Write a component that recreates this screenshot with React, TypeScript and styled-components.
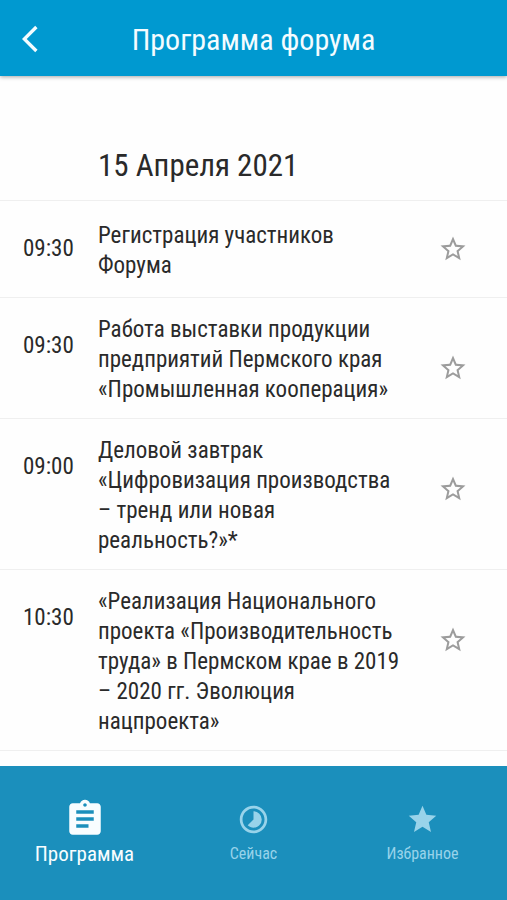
import React, { useState } from "react";
import styled, { createGlobalStyle } from "styled-components";
import { MdArrowBackIos, MdAssignment, MdStar, MdStarBorder, MdTimelapse } from "react-icons/md";

const GlobalStyle = createGlobalStyle`
  * { box-sizing: border-box; }
  body {
    margin: 0;
    background: #fefefe;
    font-family: "Roboto Condensed", Roboto, sans-serif;
    color: #2a2a2a;
  }
  button { font: inherit; border: 0; background: none; padding: 0; cursor: pointer; }
`;

const Screen = styled.div`
  display: flex;
  flex-direction: column;
  height: 100vh;
`;

const Header = styled.header`
  display: grid;
  grid-template-columns: 64px 1fr 64px;
  align-items: center;
  flex: none;
  height: 76px;
  padding-top: 2px;
  background: #0099d0;
  color: #f4fcff;
  box-shadow: 0 1px 4px rgba(0, 0, 0, 0.35);
  z-index: 1;
`;

const BackButton = styled.button`
  display: flex;
  align-items: center;
  height: 48px;
  padding-left: 22px;
  color: inherit;
`;

const Title = styled.h1`
  margin: 0;
  padding-top: 2px;
  text-align: center;
  font-size: 30px;
  line-height: 36px;
  font-weight: 400;
`;

const Content = styled.main`
  flex: 1;
  min-height: 0;
  overflow: hidden auto;
  scrollbar-width: none;
`;

const DateHeading = styled.h2`
  margin: 0;
  padding: 72px 24px 16px 98px;
  border-bottom: 1px solid #efefef;
  font-size: 31px;
  line-height: 36px;
  font-weight: 400;
`;

const EventList = styled.ul`
  margin: 0;
  padding: 0;
  list-style: none;
`;

const EventRow = styled.li`
  display: grid;
  grid-template-columns: 75px minmax(0, 1fr) 30px;
  padding: 0 39px 0 23px;
  min-height: 97px;
  border-bottom: 1px solid #efefef;
`;

const Time = styled.time`
  height: 96px;
  font-size: 23px;
  line-height: 96px;
`;

const EventName = styled.p`
  align-self: center;
  margin: 0;
  padding: 17px 36px 13px 0;
  font-size: 23px;
  line-height: 30px;
`;

const FavouriteButton = styled.button<{ $tall: boolean }>`
  display: flex;
  align-items: center;
  justify-content: center;
  height: ${(p) => (p.$tall ? 120 : 96)}px;
  padding-top: ${(p) => (p.$tall ? 20 : 0)}px;
  color: #9c9c9c;
`;

const TabBar = styled.nav`
  display: grid;
  grid-template-columns: repeat(3, 1fr);
  flex: none;
  height: 134px;
  background: #1b8fbc;
`;

const Tab = styled.button<{ $active: boolean }>`
  display: grid;
  grid-template-rows: 42px 28px;
  align-content: start;
  place-items: center;
  padding-top: 32px;
  color: ${(p) => (p.$active ? "#f8fdff" : "#98d3ea")};
  font-size: ${(p) => (p.$active ? 21 : 16)}px;
  line-height: 28px;
`;

const events = [
  { time: "09:30", name: "Регистрация участников Форума", tall: false },
  { time: "09:30", name: "Работа выставки продукции предприятий Пермского края «Промышленная кооперация»", tall: true },
  { time: "09:00", name: "Деловой завтрак «Цифровизация производства – тренд или новая реальность?»*", tall: true },
  { time: "10:30", name: "«Реализация Национального проекта «Производительность труда» в Пермском крае в 2019 – 2020 гг. Эволюция нацпроекта»", tall: true },
];

const tabs = [
  { label: "Программа", Icon: MdAssignment },
  { label: "Сейчас", Icon: MdTimelapse },
  { label: "Избранное", Icon: MdStar },
];

export default function App() {
  const [active, setActive] = useState(0);
  const [favourites, setFavourites] = useState<number[]>([]);
  const toggle = (i: number) =>
    setFavourites((f) => (f.includes(i) ? f.filter((n) => n !== i) : [...f, i]));

  return (
    <Screen>
      <GlobalStyle />
      <Header>
        <BackButton aria-label="Назад">
          <MdArrowBackIos size={32} />
        </BackButton>
        <Title>Программа форума</Title>
      </Header>
      <Content>
        <DateHeading>15 Апреля 2021</DateHeading>
        <EventList>
          {events.map((e, i) => (
            <EventRow key={i}>
              <Time>{e.time}</Time>
              <EventName>{e.name}</EventName>
              <FavouriteButton
                $tall={e.tall}
                aria-label="В избранное"
                aria-pressed={favourites.includes(i)}
                onClick={() => toggle(i)}
              >
                {favourites.includes(i) ? <MdStar size={30} /> : <MdStarBorder size={30} />}
              </FavouriteButton>
            </EventRow>
          ))}
        </EventList>
      </Content>
      <TabBar>
        {tabs.map(({ label, Icon }, i) => (
          <Tab key={label} $active={i === active} onClick={() => setActive(i)}>
            <Icon size={i === active ? 42 : 33} />
            <span>{label}</span>
          </Tab>
        ))}
      </TabBar>
    </Screen>
  );
}
